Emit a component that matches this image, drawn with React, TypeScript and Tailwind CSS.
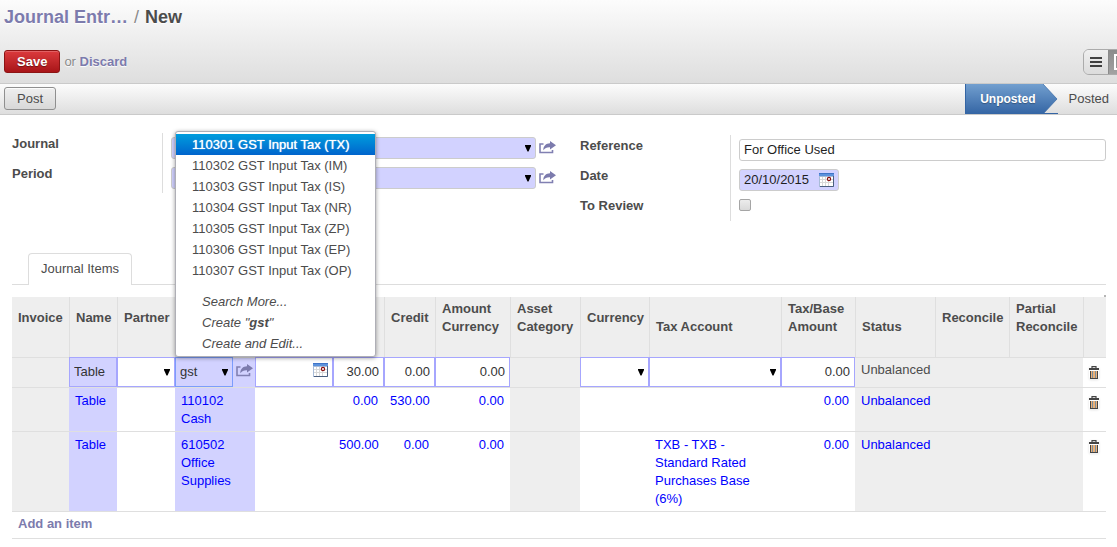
import type { ReactNode } from 'react';

interface Column {
  key: string;
  label: string;
  width: string;
  align?: 'middle' | 'end';
}

const COLUMNS: Column[] = [
  { key: 'invoice', label: 'Invoice', width: 'w-[57px]' },
  { key: 'name', label: 'Name', width: 'w-[48px]' },
  { key: 'partner', label: 'Partner', width: 'w-[58px]' },
  { key: 'account', label: '', width: 'w-[80px]' },
  { key: 'due', label: '', width: 'w-[78px]' },
  { key: 'debit', label: '', width: 'w-[51px]' },
  { key: 'credit', label: 'Credit', width: 'w-[51px]' },
  { key: 'amountCurrency', label: 'Amount Currency', width: 'w-[75px]' },
  { key: 'asset', label: 'Asset Category', width: 'w-[70px]' },
  { key: 'currency', label: 'Currency', width: 'w-[69px]' },
  { key: 'taxAccount', label: 'Tax Account', width: 'w-[132px]', align: 'end' },
  { key: 'taxBase', label: 'Tax/Base Amount', width: 'w-[74px]' },
  { key: 'status', label: 'Status', width: 'w-[80px]', align: 'end' },
  { key: 'reconcile', label: 'Reconcile', width: 'w-[74px]' },
  { key: 'partial', label: 'Partial Reconcile', width: 'w-[74px]' },
  { key: 'delete', label: '', width: 'w-[23px]' },
];

const ACCOUNTS = [
  '110301 GST Input Tax (TX)',
  '110302 GST Input Tax (IM)',
  '110303 GST Input Tax (IS)',
  '110304 GST Input Tax (NR)',
  '110305 GST Input Tax (ZP)',
  '110306 GST Input Tax (EP)',
  '110307 GST Input Tax (OP)',
];

const LINES = [
  { id: 1, name: 'Table', account: '110102 Cash', debit: '0.00', credit: '530.00', amount: '0.00', tax: '', base: '0.00' },
  {
    id: 2,
    name: 'Table',
    account: '610502 Office Supplies',
    debit: '500.00',
    credit: '0.00',
    amount: '0.00',
    tax: 'TXB - TXB - Standard Rated Purchases Base (6%)',
    base: '0.00',
  },
];

function ArrowIcon() {
  return (
    <svg className="pointer-events-none absolute top-1/2 right-[5px] -mt-[3px] h-[7px] w-[6px]" viewBox="0 0 6 7" aria-hidden="true">
      <path d="M0 0h6v1L3.500 6.500h-1L0 1z" fill="#000" />
    </svg>
  );
}

function ShareIcon() {
  return (
    <svg width="17" height="13" viewBox="0 0 17 13" aria-hidden="true">
      <path d="M4.500 3H1v8.500h12.500V9" fill="none" stroke="#8180b2" strokeWidth="1.600" />
      <path d="M11 0l6 4.200-6 4.200V6.200C8 6 6 7 4.300 9.200 4.300 5 7 2.400 11 2.300z" fill="#7c7bad" />
    </svg>
  );
}

function CalendarIcon() {
  return (
    <svg width="15" height="14" viewBox="0 0 15 14" aria-hidden="true">
      <rect x="0" y="0" width="15" height="14" fill="#a9bcd8" />
      <rect x="1" y="4" width="13" height="9" fill="#fff" />
      <rect x="0" y="0" width="15" height="3" fill="#5c92dc" />
      <rect x="0" y="0" width="15" height="1" fill="#3f74c8" />
      <path d="M3.500 4v9M6.500 4v9M9.500 4v9M1 6.500h13M1 9.500h13" stroke="#d8d8d8" />
      <path d="M14.500 3v10.500H1" fill="none" stroke="#4b5f80" />
      <circle cx="10" cy="6" r="1.600" fill="#fff" stroke="#8c1010" strokeWidth="1.200" />
    </svg>
  );
}

function TrashIcon() {
  return (
    <svg width="10" height="13" viewBox="0 0 10 13" aria-hidden="true">
      <path d="M3 2.500V.7h4v1.800" fill="none" stroke="#444" strokeWidth="1.200" />
      <rect x="0" y="2" width="10" height="2" fill="#444" />
      <rect x="1" y="5" width="8" height="8" fill="#444" />
      <rect x="2" y="5" width="6" height="7" fill="#e9b077" />
      <path d="M3.500 5v7M6.500 5v7" stroke="#7d8f9e" />
    </svg>
  );
}

function FormRow({ label, htmlFor, last, children }: { label: string; htmlFor: string; last?: boolean; children: ReactNode }) {
  return (
    <div className={last ? 'flex h-[26px]' : 'flex h-[30px]'}>
      <label htmlFor={htmlFor} className="w-[150px] shrink-0 pt-[2px] font-bold">
        {label}
      </label>
      <div className="flex min-w-0 flex-1 items-start border-l border-[#ddd] pt-1 pl-2">{children}</div>
    </div>
  );
}

function RequiredSelect({ id, name }: { id: string; name: string }) {
  return (
    <div className="flex flex-1 items-center gap-[3px]">
      <div className="relative flex-1">
        <select id={id} className="block h-[22px] w-full appearance-none rounded-[3px] border border-[#ccc] bg-[#d2d2ff]" />
        <ArrowIcon />
      </div>
      <button type="button" aria-label={`Open ${name}`} className="pb-px">
        <ShareIcon />
      </button>
    </div>
  );
}

function CellInput({ label, value, required }: { label: string; value: string; required?: boolean }) {
  return (
    <input
      aria-label={label}
      defaultValue={value}
      className={
        required
          ? 'block h-[30px] w-full border border-[#a6a6fe] bg-[#d2d2ff] px-1 pb-[2px] text-[#333]'
          : 'block h-[30px] w-full border border-[#a6a6fe] bg-white px-1 pb-[2px] text-right text-[#333]'
      }
    />
  );
}

function CellSelect({ label }: { label: string }) {
  return (
    <div className="relative">
      <select aria-label={label} className="block h-[30px] w-full appearance-none border border-[#a6a6fe] bg-white" />
      <ArrowIcon />
    </div>
  );
}

function AccountMenu() {
  return (
    <ul
      role="listbox"
      className="absolute bottom-full left-0 z-10 w-[201px] rounded-[3px] border border-[#afafb6] bg-white py-[2px] leading-[21px] shadow-[0_1px_4px_rgba(0,0,0,0.4)]"
    >
      {ACCOUNTS.map((account, idx) => (
        <li
          key={account}
          role="option"
          aria-selected={idx === 0}
          className={
            idx === 0
              ? 'bg-linear-to-b from-[#009ddd] to-[#0064cc] pl-4 text-white [text-shadow:0_0_1px_#fff]'
              : 'pl-4'
          }
        >
          {account}
        </li>
      ))}
      <li role="option" aria-selected={false} className="mt-[10px] pl-[26px] italic">
        Search More...
      </li>
      <li role="option" aria-selected={false} className="pl-[26px] italic">
        Create "<b>gst</b>"
      </li>
      <li role="option" aria-selected={false} className="pl-[26px] italic">
        Create and Edit...
      </li>
    </ul>
  );
}

function DeleteCell() {
  return (
    <td className="border-b border-[#dfdfdf] pt-2 pl-[6px] align-top">
      <button type="button" aria-label="Delete line" className="block rounded-[3px] shadow-[0_1px_2px_1px_rgba(0,0,0,0.06)]">
        <TrashIcon />
      </button>
    </td>
  );
}

// The line being edited; its inputs overlap the header's bottom border by a pixel
function EditRow() {
  const edit = 'border-b border-[#dfdfdf] align-top';
  const grey = 'border-b border-[#dfdfdf] bg-[#eee]';
  return (
    <tr className="h-[30px]">
      <td className={grey} />
      <td className={edit}>
        <div className="-mt-px">
          <CellInput label="Name" value="Table" required />
        </div>
      </td>
      <td className={edit}>
        <div className="-mt-px">
          <CellSelect label="Partner" />
        </div>
      </td>
      <td className="border-b border-[#dfdfdf] bg-[#d2d2ff] align-top">
        <div className="relative -mt-px flex items-center gap-[3px]">
          <div className="relative w-[58px]">
            <input
              role="combobox"
              aria-label="Account"
              aria-expanded="true"
              defaultValue="gst"
              className="block h-[30px] w-full border border-[#7c9dfc] bg-[#d2d2ff] px-1 pb-[2px] text-[#333]"
            />
            <ArrowIcon />
          </div>
          <button type="button" aria-label="Open account" className="pb-[3px]">
            <ShareIcon />
          </button>
          <AccountMenu />
        </div>
      </td>
      <td className={edit}>
        <div className="relative -mt-px">
          <CellInput label="Due date" value="" />
          <button type="button" aria-label="Pick due date" className="absolute top-[6px] right-[5px]">
            <CalendarIcon />
          </button>
        </div>
      </td>
      <td className={edit}>
        <div className="-mt-px">
          <CellInput label="Debit" value="30.00" />
        </div>
      </td>
      <td className={edit}>
        <div className="-mt-px">
          <CellInput label="Credit" value="0.00" />
        </div>
      </td>
      <td className={edit}>
        <div className="-mt-px">
          <CellInput label="Amount currency" value="0.00" />
        </div>
      </td>
      <td className={grey} />
      <td className={edit}>
        <div className="-mt-px">
          <CellSelect label="Currency" />
        </div>
      </td>
      <td className={edit}>
        <div className="-mt-px">
          <CellSelect label="Tax account" />
        </div>
      </td>
      <td className={edit}>
        <div className="-mt-px">
          <CellInput label="Tax/base amount" value="0.00" />
        </div>
      </td>
      <td className="border-b border-[#dfdfdf] bg-[#eee] px-[6px] pt-[3px] align-top">Unbalanced</td>
      <td className={grey} />
      <td className={grey} />
      <DeleteCell />
    </tr>
  );
}

function ItemsTable() {
  const cell = 'border-b border-[#dfdfdf] px-[6px] pt-1 pb-[3px] align-top';
  return (
    <table className="w-full table-fixed border-separate border-spacing-0">
      <colgroup>
        {COLUMNS.map((col) => (
          <col key={col.key} className={col.width} />
        ))}
      </colgroup>
      <thead>
        <tr>
          {COLUMNS.map((col, idx) => (
            <th
              key={col.key}
              className={
                idx === 0
                  ? 'border-b border-[#dfdfdf] bg-[#eee] px-[6px] pt-[3px] pb-[21px] text-left'
                  : 'border-b border-l border-[#dfdfdf] bg-[#eee] px-[6px] pt-[3px] pb-[21px] text-left'
              }
            >
              <div className={col.align === 'end' ? 'flex h-9 items-end' : 'flex h-9 items-center'}>{col.label}</div>
            </th>
          ))}
        </tr>
      </thead>
      <tbody>
        <EditRow />
        {LINES.map((line) => (
          <tr key={line.id} className="text-[#0000ff]">
            <td className={`${cell} bg-[#eee]`} />
            <td className={`${cell} bg-[#d2d2ff]`}>{line.name}</td>
            <td className={cell} />
            <td className={`${cell} bg-[#d2d2ff]`}>{line.account}</td>
            <td className={cell} />
            <td className={`${cell} text-right`}>{line.debit}</td>
            <td className={`${cell} text-right`}>{line.credit}</td>
            <td className={`${cell} text-right`}>{line.amount}</td>
            <td className={`${cell} bg-[#eee]`} />
            <td className={cell} />
            <td className={cell}>{line.tax}</td>
            <td className={`${cell} text-right`}>{line.base}</td>
            <td className={`${cell} bg-[#eee]`}>Unbalanced</td>
            <td className={`${cell} bg-[#eee]`} />
            <td className={`${cell} bg-[#eee]`} />
            <DeleteCell />
          </tr>
        ))}
      </tbody>
      <tfoot>
        <tr>
          <td colSpan={16} className="border-b border-[#dfdfdf] px-[6px] pt-[3px] pb-[5px]">
            <a href="#add" className="block font-bold text-[#7c7bad]">
              Add an item
            </a>
          </td>
        </tr>
      </tfoot>
    </table>
  );
}

function Header() {
  return (
    <header className="overflow-hidden border-b border-[#cacaca] bg-linear-to-b from-[#fcfcfc] to-[#dedede] pt-[5px] pb-2 pl-1">
      <h1 className="flex gap-[6px] text-lg leading-6 font-bold [text-shadow:0_1px_1px_#fff]">
        <a href="#entries" className="text-[#7c7bad]">
          Journal Entr…
        </a>
        <span className="font-normal text-[#8a8a8a]">/</span>
        <span>New</span>
      </h1>
      <div className="mt-5 flex items-start">
        <button
          type="button"
          className="mt-px h-[23px] rounded-[3px] border border-[#8c1414] bg-linear-to-b from-[#dc3a3d] to-[#a81418] px-3 leading-[18px] font-bold text-white shadow-[inset_0_1px_0_rgba(255,255,255,0.2)] [text-shadow:0_1px_1px_rgba(0,0,0,0.4)]"
        >
          Save
        </button>
        <p className="mt-1 ml-1 text-[#8a8a8a] [text-shadow:0_1px_1px_#fff]">
          or{' '}
          <a href="#discard" className="font-bold text-[#7c7bad]">
            Discard
          </a>
        </p>
        <div className="-mr-4 ml-auto flex h-[26px] w-[50px] overflow-hidden rounded-[6px] border border-[#ababab]">
          <button type="button" aria-label="List view" className="flex w-6 shrink-0 items-center justify-center bg-linear-to-b from-[#efefef] to-[#dcdcdc]">
            <svg width="12" height="10" viewBox="0 0 12 10" aria-hidden="true">
              <path d="M0 1h12M0 5h12M0 9h12" stroke="#404040" strokeWidth="2" />
            </svg>
          </button>
          <button type="button" aria-label="Form view" className="flex flex-1 items-center border-l border-[#8b8b8b] bg-linear-to-b from-[#8c8c8c] to-[#a2a2a2] pl-[5px]">
            <svg width="14" height="16" viewBox="0 0 14 16" aria-hidden="true">
              <path d="M1 1h12v14H1z" fill="none" stroke="#fff" strokeWidth="2" />
              <path d="M4 5h6M4 8h6" stroke="#fff" />
            </svg>
          </button>
        </div>
      </div>
    </header>
  );
}

function StatusBar() {
  return (
    <div className="flex h-[31px] items-stretch border-b border-[#cacaca] bg-linear-to-b from-[#fcfcfc] to-[#dedede] pl-1">
      <button
        type="button"
        className="mt-[3px] h-[23px] rounded-[3px] border border-[#8f8f8f] bg-linear-to-b from-[#efefef] to-[#d8d8d8] px-3 leading-[18px] shadow-[inset_0_1px_0_rgba(255,255,255,0.8)]"
      >
        Post
      </button>
      <ol className="ml-auto flex items-stretch leading-[30px]">
        <li className="flex">
          <span className="border-l border-[#3465a4] bg-linear-to-b from-[#729fcf] to-[#3465a4] pr-[7px] pl-[14px] text-xs leading-[30px] font-bold text-white [text-shadow:0_1px_1px_rgba(0,0,0,0.3)]">
            Unposted
          </span>
          <svg width="15" height="30" viewBox="0 0 15 30" aria-hidden="true">
            <defs>
              <linearGradient id="tip" x1="0" y1="0" x2="0" y2="1">
                <stop offset="0" stopColor="#729fcf" />
                <stop offset="1" stopColor="#3465a4" />
              </linearGradient>
            </defs>
            <path d="M0 0l14 15L0 30z" fill="url(#tip)" />
            <path d="M0 0l14 15L0 30" fill="none" stroke="#3465a4" strokeWidth="0.700" />
            <path d="M0 29.500h15" stroke="#3465a4" />
          </svg>
        </li>
        <li className="pr-2 pl-[11px]">Posted</li>
      </ol>
    </div>
  );
}

export default function App() {
  return (
    <div className="min-h-screen overflow-x-hidden bg-white font-['Liberation_Sans',Arial,sans-serif] text-[13px] leading-[18px] text-[#4c4c4c]">
      <Header />
      <StatusBar />
      <main className="pt-[18px] pr-[11px] pl-3">
        <div className="grid grid-cols-[544fr_526fr] gap-6">
          <div>
            <FormRow label="Journal" htmlFor="journal">
              <RequiredSelect id="journal" name="journal" />
            </FormRow>
            <FormRow label="Period" htmlFor="period">
              <RequiredSelect id="period" name="period" />
            </FormRow>
          </div>
          <div className="pt-[2px]">
            <FormRow label="Reference" htmlFor="reference">
              <input id="reference" defaultValue="For Office Used" className="h-[22px] w-full rounded-[3px] border border-[#ccc] px-1 pb-px text-[#1f1f1f]" />
            </FormRow>
            <FormRow label="Date" htmlFor="date">
              <div className="flex h-[22px] w-[100px] items-center rounded-[3px] border border-[#ccc] bg-[#d2d2ff] pr-1 pl-1">
                <input id="date" defaultValue="20/10/2015" className="w-[75px] text-[#1f1f1f]" />
                <button type="button" aria-label="Pick date">
                  <CalendarIcon />
                </button>
              </div>
            </FormRow>
            <FormRow label="To Review" htmlFor="review" last>
              <input
                id="review"
                type="checkbox"
                className="h-3 w-3 appearance-none rounded-[2px] border border-[#a5a5a5] bg-linear-to-b from-[#ececec] to-[#d9d9d9]"
              />
            </FormRow>
          </div>
        </div>
        <div role="tablist" className="mt-8 flex border-b border-[#ddd] pl-4">
          <button
            type="button"
            role="tab"
            aria-selected="true"
            className="-mb-px rounded-t-[4px] border border-b-0 border-[#ddd] bg-white px-3 pt-[6px] pb-[7px]"
          >
            Journal Items
          </button>
        </div>
        <div className="flex h-3 items-end justify-end">
          <span className="h-[2px] w-[2px] bg-[#b5b5b5]" />
        </div>
        <ItemsTable />
      </main>
    </div>
  );
}
